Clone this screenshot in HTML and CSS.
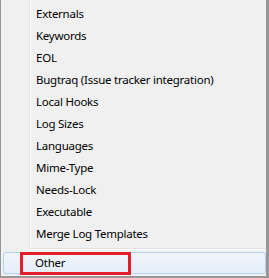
FILE: index.html
```html
<!DOCTYPE html>
<html lang="en">
<head>
    <meta charset="UTF-8">
    <title>Menu</title>
    <link rel="stylesheet" href="styles.css">
</head>
<body>
    <div class="menu">
        <ul class="menu-list">
            <li>Externals</li>
            <li>Keywords</li>
            <li>EOL</li>
            <li>Bugtraq (Issue tracker integration)</li>
            <li>Local Hooks</li>
            <li>Log Sizes</li>
            <li>Languages</li>
            <li>Mime-Type</li>
            <li>Needs-Lock</li>
            <li>Executable</li>
            <li>Merge Log Templates</li>
        </ul>
        <div class="separator"></div>
        <div class="menu-item-hover">
            <span>Other</span>
            <div class="mark"></div>
        </div>
    </div>
</body>
</html>
```

FILE: styles.css
```css
body {
    margin: 0;
    font-family: 'Segoe UI', 'Noto Sans', Arial, sans-serif;
    font-size: 11.5px;
    letter-spacing: -0.25px;
    color: #000;
    background: #fff;
}

.menu {
    position: relative;
    box-sizing: border-box;
    width: 269px;
    height: 278px;
    background: #f0f0f0;
    border-left: 1px solid #979797;
    border-right: 3px solid #979797;
    border-bottom: 2px solid #979797;
}

.menu-list {
    list-style: none;
    margin: 0 0 0 28px;
    padding: 3px 0 3px 0;
    border-left: 1px solid #e2e3e3;
    box-shadow: inset 1px 0 0 #fff;
}

.menu-list li {
    height: 22px;
    line-height: 22px;
    padding-left: 6px;
    white-space: nowrap;
}

.separator {
    margin: 0 0 0 29px;
    height: 1px;
    background: #e0e0e0;
    border-bottom: 1px solid #fff;
}

.menu-item-hover {
    position: relative;
    box-sizing: border-box;
    height: 22px;
    line-height: 20px;
    margin: 2px 0 0 2px;
    width: 263px;
    padding-left: 31px;
    border: 1px solid #aed4f8;
    border-radius: 3px;
    background: linear-gradient(#f2f6fb, #e4edf8);
}

.mark {
    position: absolute;
    left: 16px;
    top: -1px;
    width: 105px;
    height: 17px;
    border: 3px solid #e41d2a;
}
```
